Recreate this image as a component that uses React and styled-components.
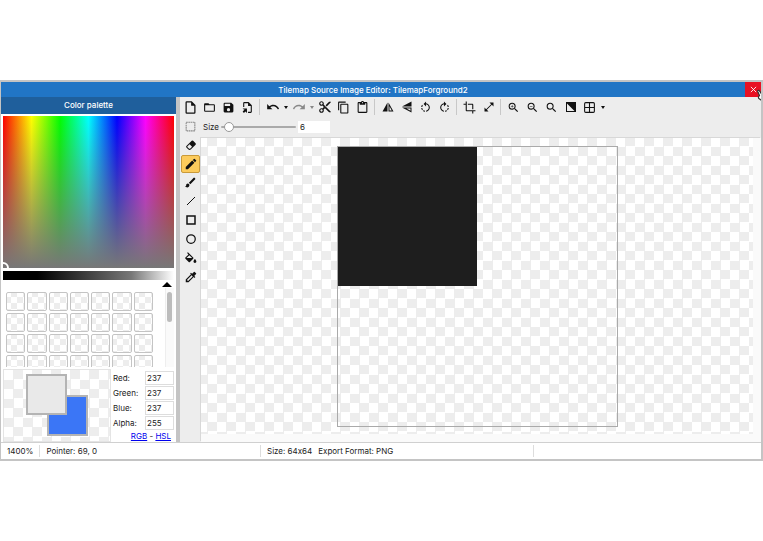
import { useState } from "react";
import {
  MdBrush,
  MdColorize,
  MdContentCopy,
  MdContentCut,
  MdContentPaste,
  MdCrop,
  MdEdit,
  MdOpenInFull,
  MdRedo,
  MdRotateLeft,
  MdRotateRight,
  MdSearch,
  MdUndo,
  MdZoomIn,
  MdZoomOut,
} from "react-icons/md";
import styled, { createGlobalStyle, css } from "styled-components";

const FileIcon = () => (
  <svg viewBox="0 0 24 24">
    <path d="M14 2H6a2 2 0 0 0-2 2v16a2 2 0 0 0 2 2h12a2 2 0 0 0 2-2V8l-6-6m4 18H6V4h7v5h5v11z" />
  </svg>
);

const FolderIcon = () => (
  <svg viewBox="0 0 24 24">
    <path d="M20 18H4V8h16m0-2h-8l-2-2H4c-1.1 0-2 .9-2 2v12a2 2 0 0 0 2 2h16a2 2 0 0 0 2-2V8a2 2 0 0 0-2-2z" />
  </svg>
);

const SaveIcon = () => (
  <svg viewBox="0 0 24 24">
    <path d="M15 9H5V5h10m-3 14a3 3 0 1 1 0-6 3 3 0 0 1 0 6m5-16H5a2 2 0 0 0-2 2v14a2 2 0 0 0 2 2h14a2 2 0 0 0 2-2V7l-4-4z" />
  </svg>
);

const ExportIcon = () => (
  <svg viewBox="0 0 24 24">
    <path d="M14 2H6a2 2 0 0 0-2 2v7h2V4h7v5h5v11h-5v2h5a2 2 0 0 0 2-2V8l-6-6z" />
    <path d="M4 13h2v3H4zM11 22v-8H3l2.800 2.800L3 19.600 5.400 22l2.800-2.800z" />
  </svg>
);

const MirrorIcon = () => (
  <svg viewBox="0 0 24 24">
    <path d="M11 3v18H1zM13 3v18h10zm2 7.500L19.500 19H15z" fillRule="evenodd" />
  </svg>
);

const FlipIcon = () => (
  <svg viewBox="0 0 24 24">
    <path d="M21 1v10H2zM2 13h19v10zm9 2 8 4.500V15z" fillRule="evenodd" />
  </svg>
);

const InvertIcon = () => (
  <svg viewBox="0 0 24 24">
    <path d="M2 2h20v20H2zm2 3v15h15z" fillRule="evenodd" />
  </svg>
);

const GridIcon = () => (
  <svg viewBox="0 0 24 24">
    <path
      d="M3 5a2 2 0 0 1 2-2h14a2 2 0 0 1 2 2v14a2 2 0 0 1-2 2H5a2 2 0 0 1-2-2zM12 3v18M3 12h18"
      fill="none"
      stroke="currentColor"
      strokeWidth="2"
    />
  </svg>
);

const SelectIcon = () => (
  <svg viewBox="0 0 24 24">
    <path
      d="M4 4h16v16H4z"
      fill="none"
      stroke="#888"
      strokeWidth="2"
      strokeDasharray="3 1"
    />
  </svg>
);

const EraserIcon = () => (
  <svg viewBox="0 0 24 24">
    <path d="m16.240 3.560 4.950 4.940c.78.790.78 2.050 0 2.840L12 20.530a4 4 0 0 1-5.660 0L2.810 17a2 2 0 0 1 0-2.840l10.600-10.600a2 2 0 0 1 2.830 0M4.220 15.580l3.540 3.530c.78.790 2.040.790 2.830 0l3.530-3.530-4.950-4.950-4.950 4.950z" />
  </svg>
);

const LineIcon = () => (
  <svg viewBox="0 0 24 24">
    <path d="M4 20 20 4" stroke="currentColor" strokeWidth="2" />
  </svg>
);

const RectIcon = () => (
  <svg viewBox="0 0 24 24">
    <path d="M4 4h16v16H4z" fill="none" stroke="currentColor" strokeWidth="3" />
  </svg>
);

const EllipseIcon = () => (
  <svg viewBox="0 0 24 24">
    <circle cx="12" cy="12" r="8.500" fill="none" stroke="currentColor" strokeWidth="2.500" />
  </svg>
);

const FillIcon = () => (
  <svg viewBox="1 -2 22 22">
    <path d="M16.560 8.940 7.620 0 6.210 1.410l2.380 2.380-5.150 5.150a1.490 1.490 0 0 0 0 2.120l5.500 5.500c.290.290.680.440 1.060.440s.770-.150 1.060-.440l5.500-5.500c.590-.580.590-1.530 0-2.120M5.210 10 10 5.210 14.790 10zM19.500 11.500s-2.500 2.500-2.500 4.200a2.500 2.500 0 0 0 5 0c0-1.700-2.500-4.200-2.500-4.200" />
  </svg>
);

const CloseIcon = () => (
  <svg viewBox="0 0 24 24">
    <path d="m3 3 18 18M21 3 3 21" stroke="currentColor" strokeWidth="3" />
  </svg>
);

const HandIcon = () => (
  <svg viewBox="0 0 24 24">
    <path
      d="M6 13 3 6c-.7-2 2-3 3-1l4 6 1-2c1-1 3-1 4 0 1-1 3-1 4 1 2-1 4 0 4 2v8l-2 3H12l-7-5c-2-2 0-4 1-5z"
      fill="#fff"
      stroke="#333"
      strokeWidth="2"
    />
  </svg>
);

const toolbar = [
  { label: "New", icon: FileIcon, size: 15 },
  { label: "Open", icon: FolderIcon },
  { label: "Save", icon: SaveIcon },
  { label: "Export", icon: ExportIcon },
  "separator",
  { label: "Undo", icon: MdUndo, size: 14 },
  { label: "Undo history", caret: true },
  { label: "Redo", icon: MdRedo, size: 14, muted: true },
  { label: "Redo history", caret: true, muted: true },
  { label: "Cut", icon: MdContentCut, size: 14 },
  { label: "Copy", icon: MdContentCopy },
  { label: "Paste", icon: MdContentPaste },
  "separator",
  { label: "Mirror", icon: MirrorIcon, size: 12 },
  { label: "Flip", icon: FlipIcon, size: 12 },
  { label: "Rotate left", icon: MdRotateLeft },
  { label: "Rotate right", icon: MdRotateRight },
  "separator",
  { label: "Crop", icon: MdCrop },
  { label: "Resize", icon: MdOpenInFull, size: 12 },
  "separator",
  { label: "Zoom in", icon: MdZoomIn },
  { label: "Zoom out", icon: MdZoomOut },
  { label: "Zoom to actual size", icon: MdSearch },
  { label: "Toggle background", icon: InvertIcon, size: 12 },
  { label: "Grid", icon: GridIcon },
  { label: "Grid settings", caret: true },
];

const tools = [
  { label: "Select", icon: SelectIcon },
  { label: "Eraser", icon: EraserIcon, size: 12 },
  { label: "Pencil", icon: MdEdit, size: 14 },
  { label: "Brush", icon: MdBrush },
  { label: "Line", icon: LineIcon, size: 12 },
  { label: "Rectangle", icon: RectIcon, size: 12 },
  { label: "Ellipse", icon: EllipseIcon, size: 12 },
  { label: "Fill", icon: FillIcon },
  { label: "Color picker", icon: MdColorize, size: 14 },
];

const channels = [
  { id: "red", label: "Red:", value: 237 },
  { id: "green", label: "Green:", value: 237 },
  { id: "blue", label: "Blue:", value: 237 },
  { id: "alpha", label: "Alpha:", value: 255 },
];

export default function App() {
  const [tool, setTool] = useState("Pencil");
  const [size, setSize] = useState(6);

  return (
    <>
      <GlobalStyle />
      <EditorWindow>
        <TitleBar>
          <Title>Tilemap Source Image Editor: TilemapForground2</Title>
          <CloseButton aria-label="Close">
            <CloseIcon />
            <Pointer>
              <HandIcon />
            </Pointer>
          </CloseButton>
        </TitleBar>
        <Body>
          <Palette>
            <PaletteHeader>Color palette</PaletteHeader>
            <HueMap>
              <HueMarker />
            </HueMap>
            <ValueBar />
            <CollapseButton aria-label="Collapse">
              <svg viewBox="0 0 10 5">
                <path d="M0 5 5 0l5 5z" />
              </svg>
            </CollapseButton>
            <SwatchArea>
              <SwatchGrid>
                {Array.from({ length: 28 }, (_, i) => (
                  <Swatch key={i} aria-label={`Swatch ${i + 1}`} />
                ))}
              </SwatchGrid>
              <ScrollTrack>
                <ScrollThumb />
              </ScrollTrack>
            </SwatchArea>
            <ColorRow>
              <Preview>
                <SecondaryColor />
                <PrimaryColor />
              </Preview>
              <Channels>
                {channels.map(({ id, label, value }) => (
                  <Channel key={id}>
                    <label htmlFor={id}>{label}</label>
                    <ChannelInput id={id} defaultValue={value} />
                  </Channel>
                ))}
                <Modes>
                  <a href="#rgb">RGB</a> - <a href="#hsl">HSL</a>
                </Modes>
              </Channels>
            </ColorRow>
          </Palette>
          <Workspace>
            <Toolbar>
              {toolbar.map((item, i) => {
                if (item === "separator") return <Separator key={i} />;
                const { label, icon: Icon, caret, muted } = item;
                return caret ? (
                  <CaretButton key={label} aria-label={label} $muted={muted}>
                    <svg viewBox="0 0 4 3">
                      <path d="M0 0h4L2 3z" />
                    </svg>
                  </CaretButton>
                ) : (
                  <ToolButton
                    key={label}
                    aria-label={label}
                    $size={item.size}
                    $muted={muted}
                  >
                    <Icon />
                  </ToolButton>
                );
              })}
            </Toolbar>
            <Lower>
              <ToolStrip>
                {tools.map(({ label, icon: Icon, size: iconSize }) => (
                  <ToolButton
                    key={label}
                    aria-label={label}
                    $size={iconSize}
                    $active={label === tool}
                    onClick={() => setTool(label)}
                  >
                    <Icon />
                  </ToolButton>
                ))}
              </ToolStrip>
              <Stage>
                <Options>
                  <label htmlFor="size">Size</label>
                  <SizeSlider
                    id="size"
                    type="range"
                    min="1"
                    max="100"
                    value={size}
                    onChange={(e) => setSize(e.target.value)}
                  />
                  <SizeInput
                    aria-label="Size value"
                    value={size}
                    onChange={(e) => setSize(e.target.value)}
                  />
                </Options>
                <CanvasArea>
                  <Artboard>
                    <Tile />
                  </Artboard>
                </CanvasArea>
              </Stage>
            </Lower>
          </Workspace>
        </Body>
        <StatusBar>
          <ZoomStatus>1400%</ZoomStatus>
          <span>Pointer: 69, 0</span>
          <FileStatus>
            <span>Size: 64x64</span>
            <span>Export Format: PNG</span>
          </FileStatus>
          <EmptyStatus />
        </StatusBar>
      </EditorWindow>
    </>
  );
}

const GlobalStyle = createGlobalStyle`
  * {
    box-sizing: border-box;
  }

  body {
    margin: 0;
    padding: 80px 0;
    background: #fff;
    color: #222;
    font: 8px/12px Inter, "Liberation Sans", sans-serif;
    font-variant-ligatures: no-contextual;
  }

  button,
  input {
    margin: 0;
    padding: 0;
    border: none;
    background: none;
    color: inherit;
    font: inherit;
  }

  svg {
    display: block;
    fill: currentColor;
  }
`;

const checker = css`
  background-color: #fff;
  background-image: repeating-conic-gradient(#ededed 0 25%, #fff 0 50%);
`;

const EditorWindow = styled.main`
  overflow: clip;
  border: solid #c4c4c4;
  border-width: 2px 2px 2px 1px;
  background: #fff;
`;

const TitleBar = styled.header`
  display: flex;
  height: 15px;
  background: #2175c5;
  color: #fff;
`;

const Title = styled.h1`
  flex: 1;
  margin: 0;
  font-size: 8px;
  font-weight: 500;
  line-height: 16px;
  text-align: center;
`;

const CloseButton = styled.button`
  position: relative;
  display: grid;
  place-items: center;
  width: 16px;
  background: #e81123;
  color: #fff;

  svg {
    width: 7px;
    height: 7px;
  }
`;

const Pointer = styled.span`
  position: absolute;
  z-index: 1;
  top: 6px;
  left: 11px;

  svg {
    width: 14px;
    height: 14px;
  }
`;

const Body = styled.div`
  display: flex;
`;

const Palette = styled.aside`
  display: flex;
  flex-direction: column;
  flex: none;
  width: 179px;
  border-right: 4px solid #c4c4c4;
`;

const PaletteHeader = styled.h2`
  margin: 0 0 2px;
  background: #1f5f9c;
  color: #fff;
  font-size: 8px;
  font-weight: 500;
  line-height: 17px;
  text-align: center;
`;

const HueMap = styled.div`
  position: relative;
  overflow: hidden;
  height: 152px;
  margin: 0 2px;
  background:
    linear-gradient(rgb(119 119 119 / 0), rgb(119 119 119)),
    linear-gradient(to right, #f00, #ff0, #0f0, #0ff, #00f, #f0f, #f00);
`;

const HueMarker = styled.span`
  position: absolute;
  bottom: -6px;
  left: -6px;
  width: 12px;
  height: 12px;
  border: 2px solid #fff;
  border-radius: 50%;
`;

const ValueBar = styled.div`
  height: 9px;
  margin: 3px 2px 2px;
  background: linear-gradient(to right, #000 20%, #777 75%, #fff);
`;

const CollapseButton = styled.button`
  align-self: flex-end;
  margin-right: 4px;
  color: #000;

  svg {
    width: 10px;
    height: 5px;
  }
`;

const SwatchArea = styled.div`
  display: flex;
  justify-content: space-between;
  height: 79px;
  margin: 1px 2px 0 5px;
  overflow: hidden;
`;

const SwatchGrid = styled.div`
  display: grid;
  grid-template-columns: repeat(7, 1fr);
  grid-auto-rows: 19px;
  gap: 2px;
  width: 147px;
  padding-top: 4px;
`;

const Swatch = styled.button`
  ${checker}
  background-size: 12px 12px;
  background-position: 4px 4px;
  border: 1px solid #c4c4c4;
  border-radius: 2px;
`;

const ScrollTrack = styled.div`
  width: 9px;
  padding: 4px 2px 4px 1px;
  border-left: 1px solid #eee;
  background: #fafafa;
`;

const ScrollThumb = styled.div`
  height: 30px;
  border-radius: 3px;
  background: #bcbcbc;
`;

const ColorRow = styled.div`
  display: flex;
  gap: 2px;
  margin: 2px 2px 0;
`;

const Preview = styled.div`
  ${checker}
  background-size: 19px 19px;
  position: relative;
  width: 108px;
  height: 73px;
  border: 1px solid #e4e4e4;
`;

const PrimaryColor = styled.div`
  position: absolute;
  top: 4px;
  left: 22px;
  width: 41px;
  height: 41px;
  border: 2px solid #b4b4b4;
  background: #e9e9e9;
`;

const SecondaryColor = styled(PrimaryColor)`
  top: 25px;
  left: 43px;
  background: #3b76f6;
`;

const Channels = styled.div`
  flex: 1;
  padding-top: 1px;
`;

const Channel = styled.div`
  display: flex;
  align-items: center;
  justify-content: space-between;
  height: 15px;
`;

const ChannelInput = styled.input`
  width: 29px;
  height: 14px;
  padding-left: 1px;
  border: 1px solid #ddd;
  background: #fff;
`;

const Modes = styled.div`
  padding-right: 3px;
  text-align: right;

  a {
    color: #00e;
  }
`;

const Workspace = styled.section`
  display: flex;
  flex: 1;
  flex-direction: column;
  min-width: 0;
  background: #ededed;
`;

const Toolbar = styled.div`
  display: flex;
  height: 20px;
  padding-left: 1px;
`;

const ToolButton = styled.button`
  display: grid;
  place-items: center;
  width: 19px;
  border: 1px solid ${({ $active }) => ($active ? "#c99a3a" : "transparent")};
  border-radius: 2px;
  background: ${({ $active }) => ($active ? "#fccb5c" : "none")};
  color: ${({ $muted }) => ($muted ? "#888" : "#111")};

  svg {
    width: ${({ $size = 13 }) => $size}px;
    height: ${({ $size = 13 }) => $size}px;
  }
`;

const CaretButton = styled(ToolButton)`
  width: 7px;

  svg {
    width: 4px;
    height: 3px;
  }
`;

const Separator = styled.span`
  width: 1px;
  margin: 2px 3px 2px 2px;
  background: #c8c8c8;
`;

const Lower = styled.div`
  display: flex;
  flex: 1;
`;

const ToolStrip = styled.div`
  display: grid;
  grid-template-rows: repeat(9, 1fr);
  height: 169px;
  padding: 0 1px;
`;

const Stage = styled.div`
  display: flex;
  flex: 1;
  flex-direction: column;
  min-width: 0;
`;

const Options = styled.div`
  display: flex;
  align-items: center;
  height: 21px;
  padding: 0 0 2px 2px;
`;

const SizeSlider = styled.input`
  appearance: none;
  width: 75px;
  height: 11px;
  margin: 0 2px;

  &::-webkit-slider-runnable-track {
    height: 2px;
    border-radius: 1px;
    background: #aaa;
  }

  &::-webkit-slider-thumb {
    appearance: none;
    width: 10px;
    height: 10px;
    margin-top: -4px;
    border: 1px solid #999;
    border-radius: 50%;
    background: #fff;
  }
`;

const SizeInput = styled.input`
  width: 32px;
  height: 12px;
  padding-left: 2px;
  background: #fff;
`;

const CanvasArea = styled.div`
  ${checker}
  background-size: 19px 19px;
  background-position: -3px -1px;
  display: grid;
  flex: 1;
  place-items: center;
  border: solid #fafafa;
  border-width: 0 8px 8px 0;
  box-shadow: -1px -1px #d8d8d8;
`;

const Artboard = styled.div`
  width: 281px;
  height: 281px;
  border: 1px solid #aaa;
`;

const Tile = styled.div`
  width: 50%;
  height: 50%;
  background: #1e1e1e;
`;

const StatusBar = styled.footer`
  display: flex;
  align-items: center;
  height: 17px;
  border-top: 1px solid #d0d0d0;
`;

const ZoomStatus = styled.span`
  margin-right: 6px;
  padding: 0 6px;
  border-right: 1px solid #ddd;
`;

const FileStatus = styled.div`
  display: flex;
  gap: 6px;
  margin-left: auto;
  width: 273px;
  padding-left: 6px;
  border-left: 1px solid #ddd;
`;

const EmptyStatus = styled.div`
  width: 30%;
  height: 12px;
  border-left: 1px solid #ddd;
`;
